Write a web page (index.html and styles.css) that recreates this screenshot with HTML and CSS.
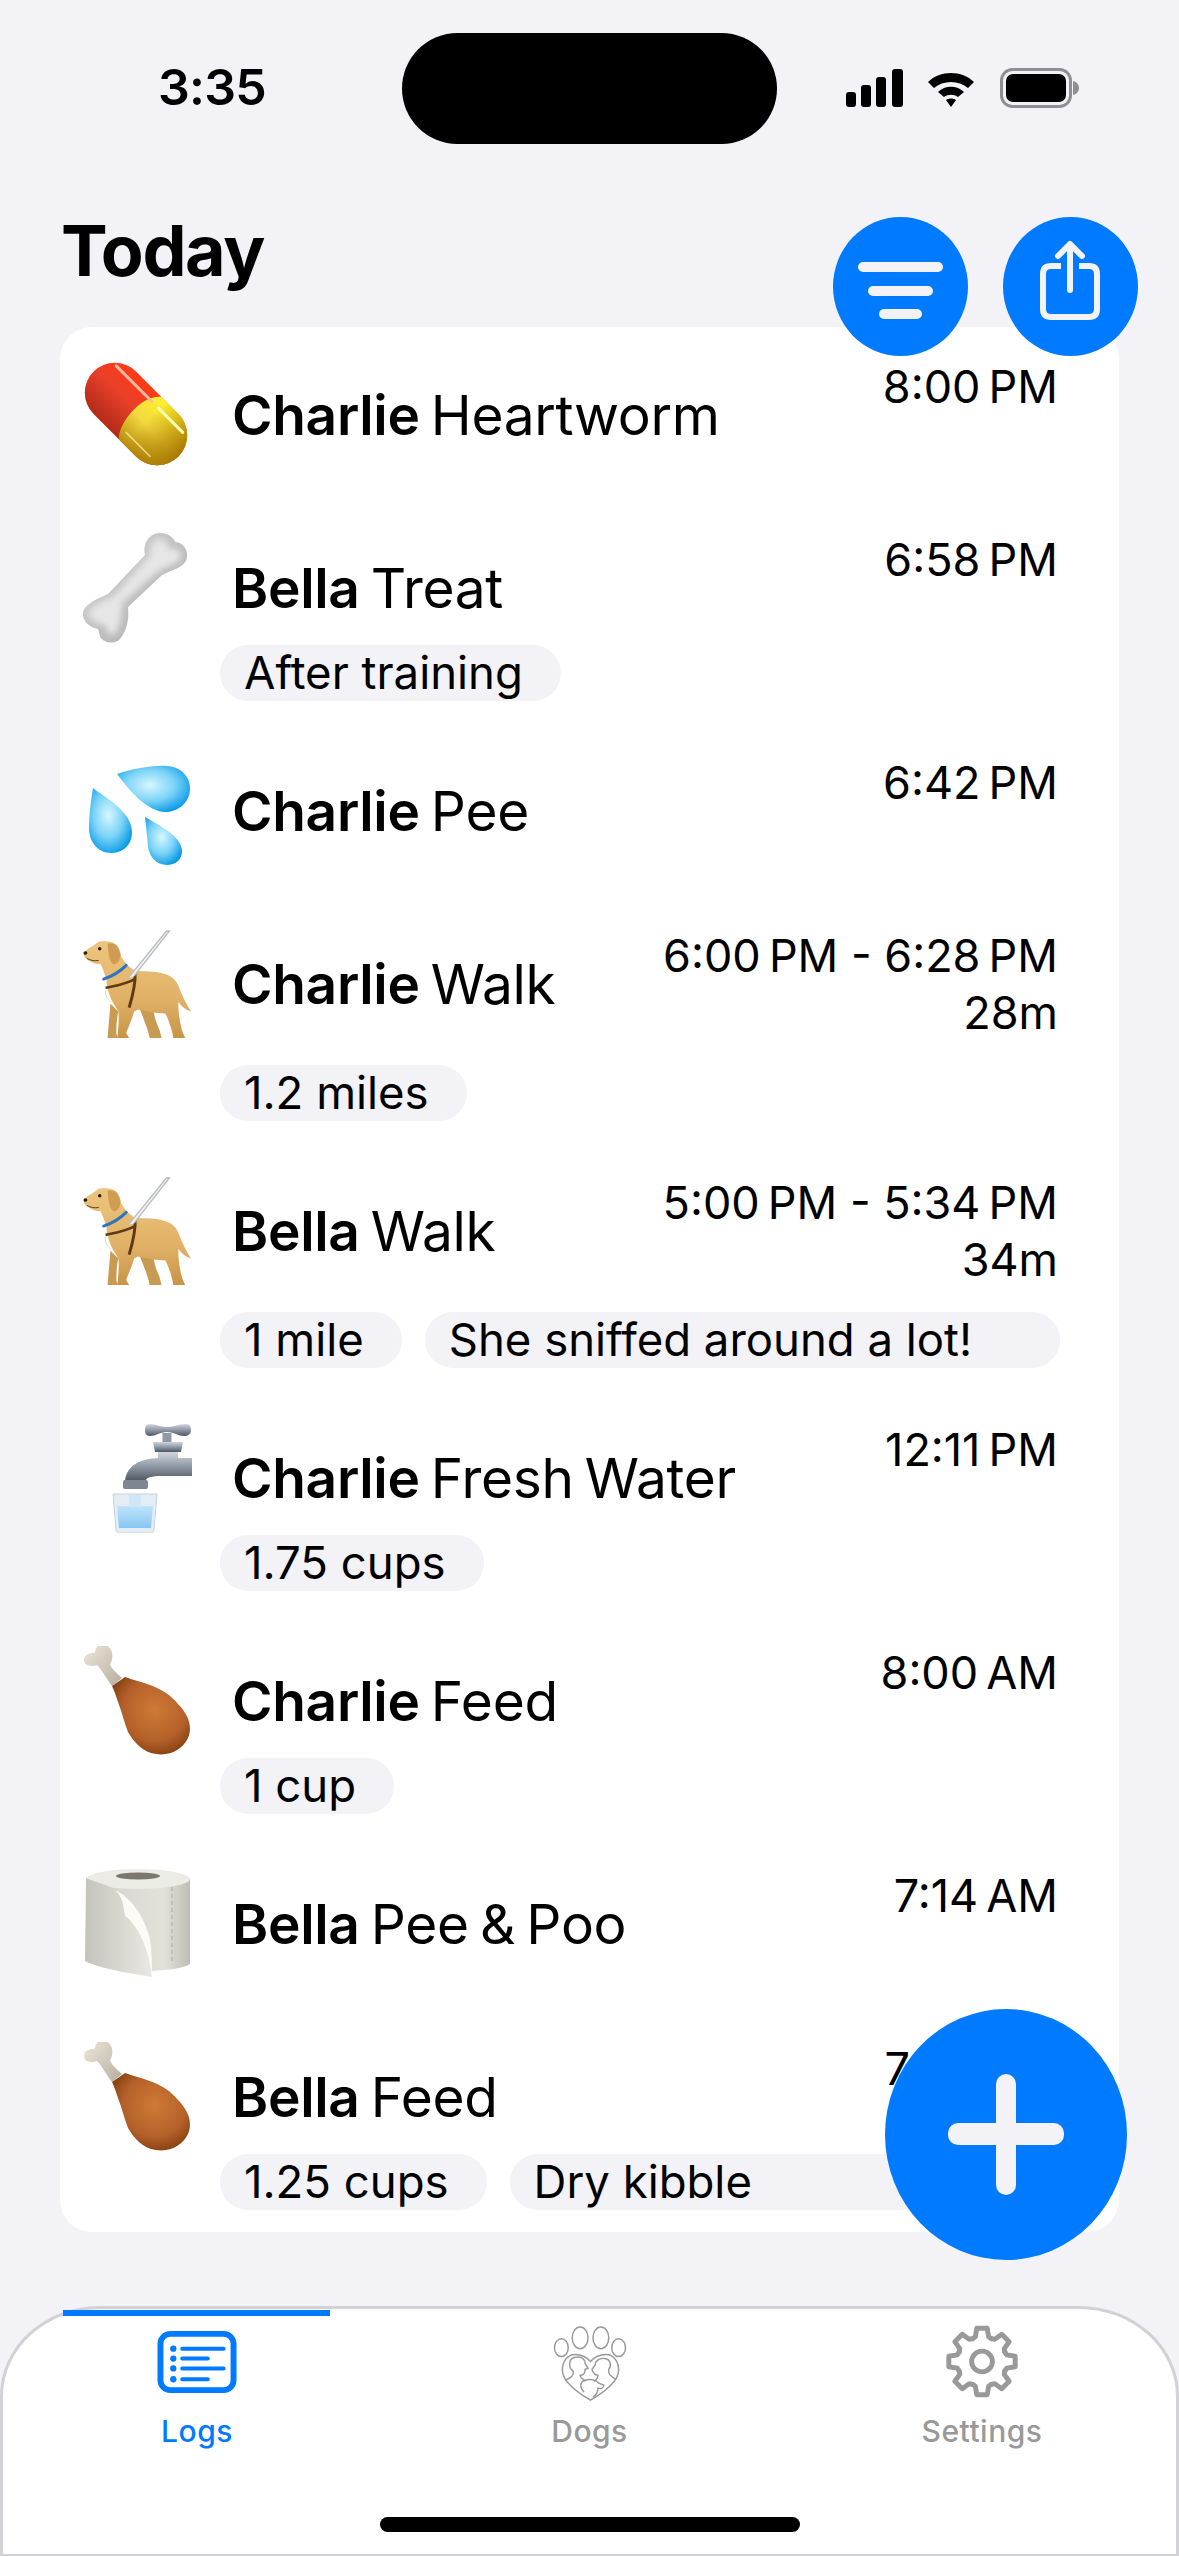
FILE: index.html
```html
<!DOCTYPE html>
<html lang="en">
<head>
<meta charset="utf-8">
<title>Logs</title>
<link rel="stylesheet" href="styles.css">
</head>
<body>
<svg class="defs" aria-hidden="true">
  <defs>
    <linearGradient id="gRed" x1="0" y1="0" x2="0" y2="1"><stop offset="0" stop-color="#ff3a14"/><stop offset=".45" stop-color="#e8402a"/><stop offset="1" stop-color="#b32a17"/></linearGradient>
    <linearGradient id="gYellow" x1="0" y1="0" x2="0" y2="1"><stop offset="0" stop-color="#fff22e"/><stop offset=".5" stop-color="#f2d93f"/><stop offset="1" stop-color="#b98d0c"/></linearGradient>
    <linearGradient id="gYellowEnd" x1="0" y1="0" x2="1" y2="0"><stop offset=".6" stop-color="#a87800" stop-opacity="0"/><stop offset="1" stop-color="#a87800"/></linearGradient>
    <linearGradient id="gBone" x1="0" y1="0" x2="1" y2="1"><stop offset="0" stop-color="#d8d8d8"/><stop offset="1" stop-color="#a9a9a9"/></linearGradient>
    <radialGradient id="gDrop" cx=".45" cy=".42" r=".62"><stop offset="0" stop-color="#d8f6ff"/><stop offset=".55" stop-color="#7ad3f7"/><stop offset="1" stop-color="#0b9be6"/></radialGradient>
    <linearGradient id="gDog" x1="0" y1="0" x2="0" y2="1"><stop offset="0" stop-color="#eec57e"/><stop offset=".6" stop-color="#e0b166"/><stop offset="1" stop-color="#c89447"/></linearGradient>
    <linearGradient id="gMetal" x1="0" y1="0" x2="0" y2="1"><stop offset="0" stop-color="#cfd6dd"/><stop offset=".5" stop-color="#8f99a5"/><stop offset="1" stop-color="#4e5660"/></linearGradient>
    <linearGradient id="gWater" x1="0" y1="0" x2="0" y2="1"><stop offset="0" stop-color="#bfe3fb"/><stop offset="1" stop-color="#86c7f3"/></linearGradient>
    <radialGradient id="gMeat" cx=".55" cy=".42" r=".62"><stop offset="0" stop-color="#cf7a35"/><stop offset=".65" stop-color="#b5602a"/><stop offset="1" stop-color="#84400f"/></radialGradient>
    <linearGradient id="gBoneCream" x1="0" y1="0" x2="1" y2="1"><stop offset="0" stop-color="#ece6da"/><stop offset="1" stop-color="#b7ae9e"/></linearGradient>
    <linearGradient id="gRoll" x1="0" y1="0" x2="1" y2="0"><stop offset="0" stop-color="#b3b2a8"/><stop offset=".3" stop-color="#d8d8d0"/><stop offset=".75" stop-color="#e2e2da"/><stop offset="1" stop-color="#bdbdb3"/></linearGradient>
    <linearGradient id="gSheet" x1="0" y1="0" x2="1" y2="0"><stop offset="0" stop-color="#c4c4bb"/><stop offset="1" stop-color="#e9e9e3"/></linearGradient>
    <filter id="soft" x="-20%" y="-20%" width="140%" height="140%"><feGaussianBlur stdDeviation="3"/></filter>

    <symbol id="e-pill" viewBox="0 0 110 110">
      <g transform="rotate(45 54 54)">
        <rect x="-6" y="24" width="120" height="60" rx="30" fill="url(#gRed)"/>
        <path d="M60 24 H84 A30 30 0 0 1 84 84 H60 C48 74 44 36 60 24Z" fill="url(#gYellow)"/>
        <rect x="-6" y="24" width="120" height="60" rx="30" fill="url(#gYellowEnd)"/>
        <path d="M6 34 H56" stroke="#ffb9a4" stroke-width="3" stroke-linecap="round" fill="none"/>
        <path d="M66 34 H100" stroke="#fffbb0" stroke-width="3" stroke-linecap="round" fill="none"/>
        <path d="M60 74 H94" stroke="#fff3b8" stroke-width="1.5" stroke-linecap="round" fill="none" opacity=".7"/>
      </g>
    </symbol>

    <symbol id="e-bone" viewBox="0 0 110 110">
      <path d="M63 22 C60 10 68 0 78 0 C88 0 92 6 93 9 C100 9 106 16 105 24 C104 34 92 36 80 42 L46 74 C47 84 46 96 38 106 C32 112 22 110 18 104 C17 100 17 98 16 96 C8 95 0 88 1 80 C2 72 14 66 26 61Z" fill="url(#gBone)"/>
      <path d="M68 22 C67 12 72 6 78 6 C84 6 86 12 86 16 C94 14 100 18 99 24 C98 30 86 32 74 40 L40 70 C40 80 38 92 34 100 C28 104 24 100 24 92 C14 90 6 86 7 80 C8 74 20 68 32 63Z" fill="#e6e6e6" filter="url(#soft)"/>
    </symbol>

    <symbol id="e-drops" viewBox="0 0 110 110">
      <path d="M35 18 C50 13 70 9 85 10 C100 11 109 22 108 34 C107 48 95 56 83 56 C66 55 50 38 35 18Z" fill="url(#gDrop)"/>
      <path d="M11 32 C24 42 50 56 50 76 C50 90 40 97 29 97 C16 97 7 86 7 72 C7 58 9 44 11 32Z" fill="url(#gDrop)"/>
      <path d="M63 61 C75 68 100 80 100 95 C100 104 93 109 85 109 C74 109 67 100 66 90 C65 80 64 70 63 61Z" fill="url(#gDrop)"/>
    </symbol>

    <symbol id="e-dog" viewBox="0 0 110 112">
      <path d="M72 82 C72 90 76 98 78 103 L80 111 H68 C66 102 62 92 58 82Z" fill="#c99a52"/>
      <path d="M36 84 C34 92 34 102 34 107 L36 111 H25 L28 76Z" fill="#c99a52"/>
      <path d="M1 24 C4 20 10 18 13 15 C17 11 25 12 31 14 C36 16 38 22 39 28 C42 34 46 38 52 42 C62 44 74 42 84 46 C92 48 96 54 98 60 C102 70 106 78 110 84 C104 82 100 78 97 74 C97 82 98 92 100 100 C101 105 103 108 104 111 L92 111 C91 104 88 94 84 86 C76 86 64 84 56 82 L52 84 C50 92 46 100 44 106 L47 111 L35 111 C36 100 37 92 36 84 L30 74 C26 66 24 58 24 52 C22 46 20 40 18 36 C13 36 8 34 3 30 C1 28 0 26 1 24Z" fill="url(#gDog)"/>
      <path d="M25 15 C32 13 37 18 38 26 C38 32 35 36 31 36 C27 34 26 26 25 15Z" fill="#cf9d52"/>
      <circle cx="17" cy="20" r="1.8" fill="#2b1d10"/>
      <ellipse cx="2.5" cy="24.5" rx="2" ry="1.8" fill="#2b1d10"/>
      <path d="M4 30 C8 32 12 33 16 32" stroke="#5a3a17" stroke-width="1" fill="none"/>
      <path d="M21 51 C30 48 38 43 44 37" stroke="#2b74c4" stroke-width="3" fill="none" stroke-linecap="round"/>
      <path d="M23 60 C32 58 44 56 53 51" stroke="#5f3a14" stroke-width="2.6" fill="none"/>
      <path d="M53 44 C54 56 50 70 47 80" stroke="#5f3a14" stroke-width="3" fill="none"/>
      <path d="M23 62 C22 68 25 72 28 74" stroke="#e9d7b3" stroke-width="1" fill="none"/>
      <path d="M46 50 L85 2 H88 L52 48" stroke="#b9bcc0" stroke-width="1.4" fill="#f2f2f2"/>
    </symbol>

    <symbol id="e-tap" viewBox="0 0 110 110">
      <path d="M85 10 V22" stroke="#8f99a5" stroke-width="9"/>
      <path d="M68 1 C74 1 78 4 85 4 C92 4 96 1 104 1 C108 1 109 4 109 7 C109 11 106 13 102 13 C96 13 92 9 85 9 C78 9 74 13 68 13 C64 13 63 10 63 7 C63 4 64 1 68 1Z" fill="url(#gMetal)"/>
      <path d="M71 19 H101 L99 29 H73Z" fill="url(#gMetal)"/>
      <path d="M76 29 H96 V35 H111 V53 H84 C72 53 66 53 63 58 H43 C45 42 58 36 76 35Z" fill="url(#gMetal)"/>
      <rect x="41" y="57" width="25" height="9" rx="2" fill="#7d8791"/>
      <path d="M31 71 H75 L72 107 C72 109 70 110 68 110 H38 C36 110 34 109 34 107Z" fill="#e4edf3" stroke="#c7d2da" stroke-width="1"/>
      <path d="M35 83 H71 L69 105 H37Z" fill="url(#gWater)"/>
      <rect x="47" y="72" width="12" height="12" fill="#cde8fb"/>
    </symbol>

    <symbol id="e-leg" viewBox="0 0 110 110">
      <path d="M40 32 C36 28 30 24 28 18 C32 12 31 2 24 -1 C16 -3 13 2 13 7 C8 6 2 9 2 14 C2 20 10 21 15 19 C20 24 24 32 30 40Z" fill="url(#gBoneCream)"/>
      <path d="M43 31 C60 37 82 40 96 58 C106 68 111 80 106 92 C100 104 88 110 74 108 C60 106 52 96 46 86 C42 76 40 66 36 56 C34 50 32 44 30 40Z" fill="url(#gMeat)"/>
    </symbol>

    <symbol id="e-roll" viewBox="0 0 110 110">
      <path d="M4 10 V90 C14 96 40 100 70 102 C86 101 102 99 108 95 V10Z" fill="url(#gRoll)"/>
      <ellipse cx="56" cy="10" rx="52" ry="10" fill="#ecece6"/>
      <ellipse cx="56" cy="7" rx="22" ry="3.5" fill="#7d776c"/>
      <path d="M90 18 V94" stroke="#a9a99f" stroke-width="1" stroke-dasharray="4 3" fill="none"/>
      <path d="M4 9 C16 14 30 17 36 22 C41 30 42 40 43 47 C48 50 52 56 56 62 C62 72 68 90 70 108 C48 104 18 100 3 92Z" fill="url(#gSheet)"/>
      <path d="M33 21 C48 28 62 46 68 70 C70 85 70 100 70 108 C68 92 64 76 56 62 C52 56 48 50 43 47 C42 40 41 30 36 24Z" fill="#fbfbf8"/>
    </symbol>
  </defs>
</svg>

<main class="screen">
  <header class="status">
    <span class="clock">3:35</span>
    <div class="island"></div>
    <div class="status-icons">
      <svg class="signal" width="58" height="38" viewBox="0 0 58 38"><rect x="0" y="23" width="10" height="15" rx="3"/><rect x="15" y="16" width="10" height="22" rx="3"/><rect x="30" y="8" width="10" height="30" rx="3"/><rect x="46" y="0" width="11" height="38" rx="3"/></svg>
      <svg class="wifi" width="50" height="38" viewBox="0 0 50 38"><path d="M2 13 C14 1 36 1 48 13 L42 19 C33 11 17 11 8 19Z"/><path d="M12 23 C19 16 31 16 38 23 L32 28 C28 25 22 25 18 28Z"/><path d="M20 31 C23 29 27 29 30 31 L25 38Z"/></svg>
      <svg class="battery" width="80" height="40" viewBox="0 0 80 40"><rect x="1.5" y="1.5" width="69" height="37" rx="11" fill="none" stroke="#8e8e93" stroke-width="3"/><rect x="6" y="6" width="60" height="28" rx="7" fill="#000"/><path d="M73 13 C77 14 79 17 79 20 C79 23 77 26 73 27Z" fill="#8e8e93"/></svg>
    </div>
  </header>

  <section class="title-bar">
    <h1 class="today">Today</h1>
  </section>

  <button class="round-btn filter-btn" aria-label="Filter">
    <svg width="135" height="139" viewBox="0 0 135 139"><path d="M30 50 H105 M40 74 H95 M51 97 H84" stroke="#f2f2f7" stroke-width="10" stroke-linecap="round" fill="none"/></svg>
  </button>
  <button class="round-btn share-btn" aria-label="Share">
    <svg width="135" height="139" viewBox="0 0 135 139"><path d="M58 49 H48 Q40 49 40 57 V92 Q40 100 48 100 H86 Q94 100 94 92 V57 Q94 49 86 49 H76" stroke="#f2f2f7" stroke-width="6" fill="none" stroke-linecap="butt"/><path d="M67 73 V27 M55 39 L67 27 L79 39" stroke="#f2f2f7" stroke-width="6" stroke-linecap="round" stroke-linejoin="round" fill="none"/></svg>
  </button>

  <section class="card">
    <article class="row">
      <div class="main">
        <div class="left"><svg class="emoji"><use href="#e-pill"/></svg><p class="name"><b>Charlie</b> Heartworm</p></div>
        <div class="time"><span>8:00&#8239;PM</span></div>
      </div>
    </article>
    <article class="row">
      <div class="main">
        <div class="left"><svg class="emoji"><use href="#e-bone"/></svg><p class="name"><b>Bella</b> Treat</p></div>
        <div class="time"><span>6:58&#8239;PM</span></div>
      </div>
      <div class="pills"><span class="pill">After training</span></div>
    </article>
    <article class="row">
      <div class="main">
        <div class="left"><svg class="emoji"><use href="#e-drops"/></svg><p class="name"><b>Charlie</b> Pee</p></div>
        <div class="time"><span>6:42&#8239;PM</span></div>
      </div>
    </article>
    <article class="row">
      <div class="main">
        <div class="left"><svg class="emoji"><use href="#e-dog"/></svg><p class="name"><b>Charlie</b> Walk</p></div>
        <div class="time"><span>6:00&#8239;PM - 6:28&#8239;PM</span><span>28m</span></div>
      </div>
      <div class="pills"><span class="pill">1.2 miles</span></div>
    </article>
    <article class="row">
      <div class="main">
        <div class="left"><svg class="emoji"><use href="#e-dog"/></svg><p class="name"><b>Bella</b> Walk</p></div>
        <div class="time"><span>5:00&#8239;PM - 5:34&#8239;PM</span><span>34m</span></div>
      </div>
      <div class="pills"><span class="pill">1 mile</span><span class="pill pill-fill">She sniffed around a lot!</span></div>
    </article>
    <article class="row">
      <div class="main">
        <div class="left"><svg class="emoji"><use href="#e-tap"/></svg><p class="name"><b>Charlie</b> Fresh Water</p></div>
        <div class="time"><span>12:11&#8239;PM</span></div>
      </div>
      <div class="pills"><span class="pill">1.75 cups</span></div>
    </article>
    <article class="row">
      <div class="main">
        <div class="left"><svg class="emoji"><use href="#e-leg"/></svg><p class="name"><b>Charlie</b> Feed</p></div>
        <div class="time"><span>8:00&#8239;AM</span></div>
      </div>
      <div class="pills"><span class="pill">1 cup</span></div>
    </article>
    <article class="row">
      <div class="main">
        <div class="left"><svg class="emoji"><use href="#e-roll"/></svg><p class="name"><b>Bella</b> Pee &amp; Poo</p></div>
        <div class="time"><span>7:14&#8239;AM</span></div>
      </div>
    </article>
    <article class="row">
      <div class="main">
        <div class="left"><svg class="emoji"><use href="#e-leg"/></svg><p class="name"><b>Bella</b> Feed</p></div>
        <div class="time"><span>7:00&#8239;AM</span></div>
      </div>
      <div class="pills"><span class="pill">1.25 cups</span><span class="pill pill-fill">Dry kibble</span></div>
    </article>
  </section>

  <button class="fab" aria-label="Add">
    <svg width="242" height="251" viewBox="0 0 242 251"><rect x="63" y="114" width="116" height="22" rx="10" fill="#f2f2f7"/><rect x="111" y="65" width="20" height="121" rx="10" fill="#f2f2f7"/></svg>
  </button>

  <nav class="tabbar">
    <span class="indicator"></span>
    <a class="tab tab-active">
      <svg width="80" height="80" viewBox="0 0 80 80"><rect x="3" y="12" width="74" height="57" rx="10" fill="none" stroke="#007aff" stroke-width="6"/><path d="M25 27 H67 M25 37 H51 M25 47 H67 M25 58 H51" stroke="#007aff" stroke-width="4" stroke-linecap="round" fill="none"/><circle cx="16" cy="27" r="3.2" fill="#007aff"/><circle cx="16" cy="37" r="3.2" fill="#007aff"/><circle cx="16" cy="47" r="3.2" fill="#007aff"/><circle cx="16" cy="58" r="3.2" fill="#007aff"/></svg>
      <span>Logs</span>
    </a>
    <a class="tab">
      <svg width="80" height="80" viewBox="0 0 80 80" fill="none" stroke="#999" stroke-width="1.5"><ellipse cx="11" cy="26" rx="7" ry="9"/><ellipse cx="30" cy="16" rx="8" ry="11"/><ellipse cx="51" cy="16" rx="8" ry="11"/><ellipse cx="69" cy="26" rx="7" ry="9"/><path d="M40.5 40 C36 35 30 33 25 33 C17 33 12 40 12 49 C12 60 28 72 40.5 79 C53 72 69 60 69 49 C69 40 64 33 56 33 C51 33 45 35 40.5 40Z"/><path d="M15 59 C21 56 24 54 23 50 C18 46 18 38 24 36 C30 34 35 37 35 42 L38 47 L35 48 C35 53 32 54 30 54 C30 57 33 58 36 60"/><path d="M66 58 C60 54 58 52 59 48 C62 44 61 38 55 37 C49 36 45 40 45 44 L42 48 C43 52 46 54 48 54 C48 57 46 59 44 60"/><path d="M34 71 C29 66 30 60 35 59 C40 57 47 59 49 62 L54 64 C54 67 51 68 48 67 C48 71 46 74 43 76"/></svg>
      <span>Dogs</span>
    </a>
    <a class="tab">
      <svg width="80" height="80" viewBox="0 0 80 80" fill="none" stroke="#999" stroke-width="5" stroke-linejoin="round" stroke-linecap="round">
        <path id="gear-seg" d="M30.4 16.9 L33.3 14.9 L34.7 6.4 H45.3 L46.7 14.9 L49.6 16.9"/>
        <use href="#gear-seg" transform="rotate(45 40 40)"/><use href="#gear-seg" transform="rotate(90 40 40)"/><use href="#gear-seg" transform="rotate(135 40 40)"/><use href="#gear-seg" transform="rotate(180 40 40)"/><use href="#gear-seg" transform="rotate(225 40 40)"/><use href="#gear-seg" transform="rotate(270 40 40)"/><use href="#gear-seg" transform="rotate(315 40 40)"/>
        <circle cx="40" cy="40" r="10.5" stroke-width="5"/>
      </svg>
      <span>Settings</span>
    </a>
    <span class="home-indicator"></span>
  </nav>
</main>
</body>
</html>
```

FILE: styles.css
```css
* { box-sizing: border-box; margin: 0; padding: 0; }

html, body {
  width: 1179px;
  height: 2556px;
  overflow: hidden;
  background: #f2f2f7;
  font-family: Inter, "Noto Sans", "Liberation Sans", sans-serif;
  color: #000;
}

.defs { position: absolute; width: 0; height: 0; }

.screen {
  position: relative;
  width: 1179px;
  height: 2556px;
  display: flex;
  flex-direction: column;
}

.status {
  height: 210px;
  padding: 56px 99px 0 158px;
  display: flex;
  justify-content: space-between;
  align-items: flex-start;
}

.clock { font-size: 50px; line-height: 62px; font-weight: 600; letter-spacing: -.8px; }

.island {
  position: absolute;
  left: 402px;
  top: 33px;
  width: 375px;
  height: 111px;
  border-radius: 56px;
  background: #000;
}

.status-icons { display: flex; align-items: center; gap: 22px; padding-top: 12px; }
.signal, .wifi { fill: #000; }
.battery { margin-left: 2px; }

.title-bar { height: 117px; padding: 0 0 0 61px; }
.today { font-size: 70px; line-height: 82px; font-weight: 700; letter-spacing: -1.4px; }

.round-btn, .fab {
  position: absolute;
  border: 0;
  border-radius: 50%;
  background: #007aff;
  display: block;
  padding: 0;
}
.round-btn { top: 217px; width: 135px; height: 139px; z-index: 2; }
.filter-btn { left: 833px; }
.share-btn { left: 1003px; }
.fab { left: 885px; top: 2009px; width: 242px; height: 251px; z-index: 2; }
.round-btn svg, .fab svg { display: block; }

.card {
  margin: 0 60px;
  width: 1059px;
  background: #fff;
  border-radius: 32px;
  padding-top: 31px;
}

.row { min-height: 173px; padding-bottom: 53px; }
.row:last-child { padding-bottom: 22px; }

.main { display: flex; justify-content: space-between; align-items: flex-start; padding: 0 61px 0 22px; }

.left { display: flex; align-items: center; gap: 40px; height: 114px; }
.emoji { width: 110px; height: 110px; overflow: visible; flex: none; }

.name { font-size: 55px; line-height: 66px; font-weight: 400; white-space: nowrap; letter-spacing: -.3px; word-spacing: -4px; }
.name b { font-weight: 600; }

.time {
  display: flex;
  flex-direction: column;
  align-items: flex-end;
  padding-bottom: 24px;
  font-size: 45px;
  line-height: 57px;
  white-space: nowrap;
}

.pills { display: flex; gap: 23px; padding: 0 59px 0 160px; }

.pill {
  height: 56px;
  line-height: 56px;
  border-radius: 28px;
  background: #f2f2f7;
  padding: 0 38px 0 24px;
  font-size: 45.5px;
  white-space: nowrap;
}
.pill-fill { flex: 1; }

.tabbar {
  position: absolute;
  left: 0;
  bottom: 0;
  width: 1179px;
  height: 250px;
  background: #fff;
  border: 3px solid #d1d1d6;
  border-bottom-width: 2px;
  border-radius: 100px 100px 0 0 / 90px 90px 0 0;
  display: grid;
  grid-template-columns: repeat(3, 392.5px);
  justify-content: center;
}

.indicator {
  position: absolute;
  left: 60px;
  top: 1px;
  width: 267px;
  height: 6px;
  background: #007aff;
}

.tab {
  display: flex;
  flex-direction: column;
  align-items: center;
  padding-top: 13px;
  color: #999;
  font-size: 30px;
  line-height: 36px;
  font-weight: 500;
  letter-spacing: .5px;
  height: 140px;
}
.tab svg { display: block; margin-bottom: 12px; }
.tab-active { color: #007aff; }

.home-indicator {
  position: absolute;
  left: 377px;
  top: 208px;
  width: 420px;
  height: 15px;
  border-radius: 8px;
  background: #000;
}
```
